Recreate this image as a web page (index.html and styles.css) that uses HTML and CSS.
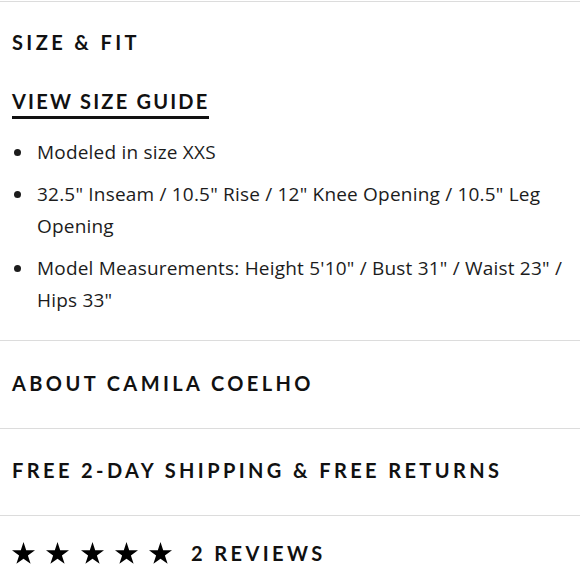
FILE: index.html
```html
<!DOCTYPE html>
<html>
<head>
<meta charset="utf-8">
<link rel="stylesheet" href="styles.css">
</head>
<body>
<div class="panel">
  <section class="section fit">
    <h2 class="title fit-title">SIZE &amp; FIT</h2>
    <a class="guide">VIEW SIZE GUIDE</a>
    <ul class="list">
      <li>Modeled in size XXS</li>
      <li>32.5" Inseam / 10.5" Rise / 12" Knee Opening / 10.5" Leg Opening</li>
      <li>Model Measurements: Height 5'10" / Bust 31" / Waist 23" / Hips 33"</li>
    </ul>
  </section>
  <section class="section row">
    <h2 class="title">ABOUT CAMILA COELHO</h2>
  </section>
  <section class="section row row-short">
    <h2 class="title">FREE 2-DAY SHIPPING &amp; FREE RETURNS</h2>
  </section>
  <section class="reviews">
    <div class="stars">
      <svg class="star" viewBox="0 0 23 22"><polygon points="11.5,0 14.2,8.3 23,8.3 15.9,13.5 18.6,21.8 11.5,16.7 4.4,21.8 7.1,13.5 0,8.3 8.8,8.3"/></svg>
      <svg class="star" viewBox="0 0 23 22"><polygon points="11.5,0 14.2,8.3 23,8.3 15.9,13.5 18.6,21.8 11.5,16.7 4.4,21.8 7.1,13.5 0,8.3 8.8,8.3"/></svg>
      <svg class="star" viewBox="0 0 23 22"><polygon points="11.5,0 14.2,8.3 23,8.3 15.9,13.5 18.6,21.8 11.5,16.7 4.4,21.8 7.1,13.5 0,8.3 8.8,8.3"/></svg>
      <svg class="star" viewBox="0 0 23 22"><polygon points="11.5,0 14.2,8.3 23,8.3 15.9,13.5 18.6,21.8 11.5,16.7 4.4,21.8 7.1,13.5 0,8.3 8.8,8.3"/></svg>
      <svg class="star" viewBox="0 0 23 22"><polygon points="11.5,0 14.2,8.3 23,8.3 15.9,13.5 18.6,21.8 11.5,16.7 4.4,21.8 7.1,13.5 0,8.3 8.8,8.3"/></svg>
    </div>
    <span class="title count">2 REVIEWS</span>
  </section>
</div>
</body>
</html>
```
FILE: styles.css
```css
html, body {
  margin: 0;
  padding: 0;
  background: #fff;
}
.panel {
  border-top: 1px solid #dcdcdc;
  margin-top: 1px;
  color: #111;
}
.section {
  border-bottom: 1px solid #dcdcdc;
  padding: 0 0 0 12px;
}
.title {
  margin: 0;
  font-family: Lato, "Liberation Sans", sans-serif;
  font-weight: 700;
  font-size: 20px;
  letter-spacing: 3.4px;
  line-height: 24px;
  color: #111;
}
.fit-title {
  padding-top: 28px;
}
.guide {
  display: inline-block;
  margin-top: 35px;
  padding-bottom: 3px;
  font-family: Lato, "Liberation Sans", sans-serif;
  font-weight: 700;
  font-size: 20px;
  letter-spacing: 2.2px;
  line-height: 24px;
  border-bottom: 3px solid #111;
  color: #111;
}
.list {
  list-style: none;
  margin: 17px 0 0;
  padding: 0 0 24px 0;
  font-family: "Open Sans", sans-serif;
  font-size: 19px;
  letter-spacing: 0.2px;
  line-height: 32px;
  color: #1c1c1c;
}
.list li {
  display: flex;
  margin-bottom: 10px;
}
.list li::before {
  content: "";
  flex-shrink: 0;
  width: 7px;
  height: 7px;
  border-radius: 50%;
  background: #1c1c1c;
  margin: 13px 16.5px 0 1.5px;
}
.list li:last-child {
  margin-bottom: 0;
}
.row {
  height: 87px;
  display: flex;
  align-items: center;
}
.row-short {
  height: 86px;
}
.row .title {
  padding-bottom: 4px;
}
.reviews {
  display: flex;
  align-items: center;
  padding: 25px 0 0 12px;
}
.stars {
  display: flex;
  gap: 11.25px;
}
.star {
  width: 23px;
  height: 22px;
  fill: #000;
}
.count {
  margin-left: 19px;
}
```
